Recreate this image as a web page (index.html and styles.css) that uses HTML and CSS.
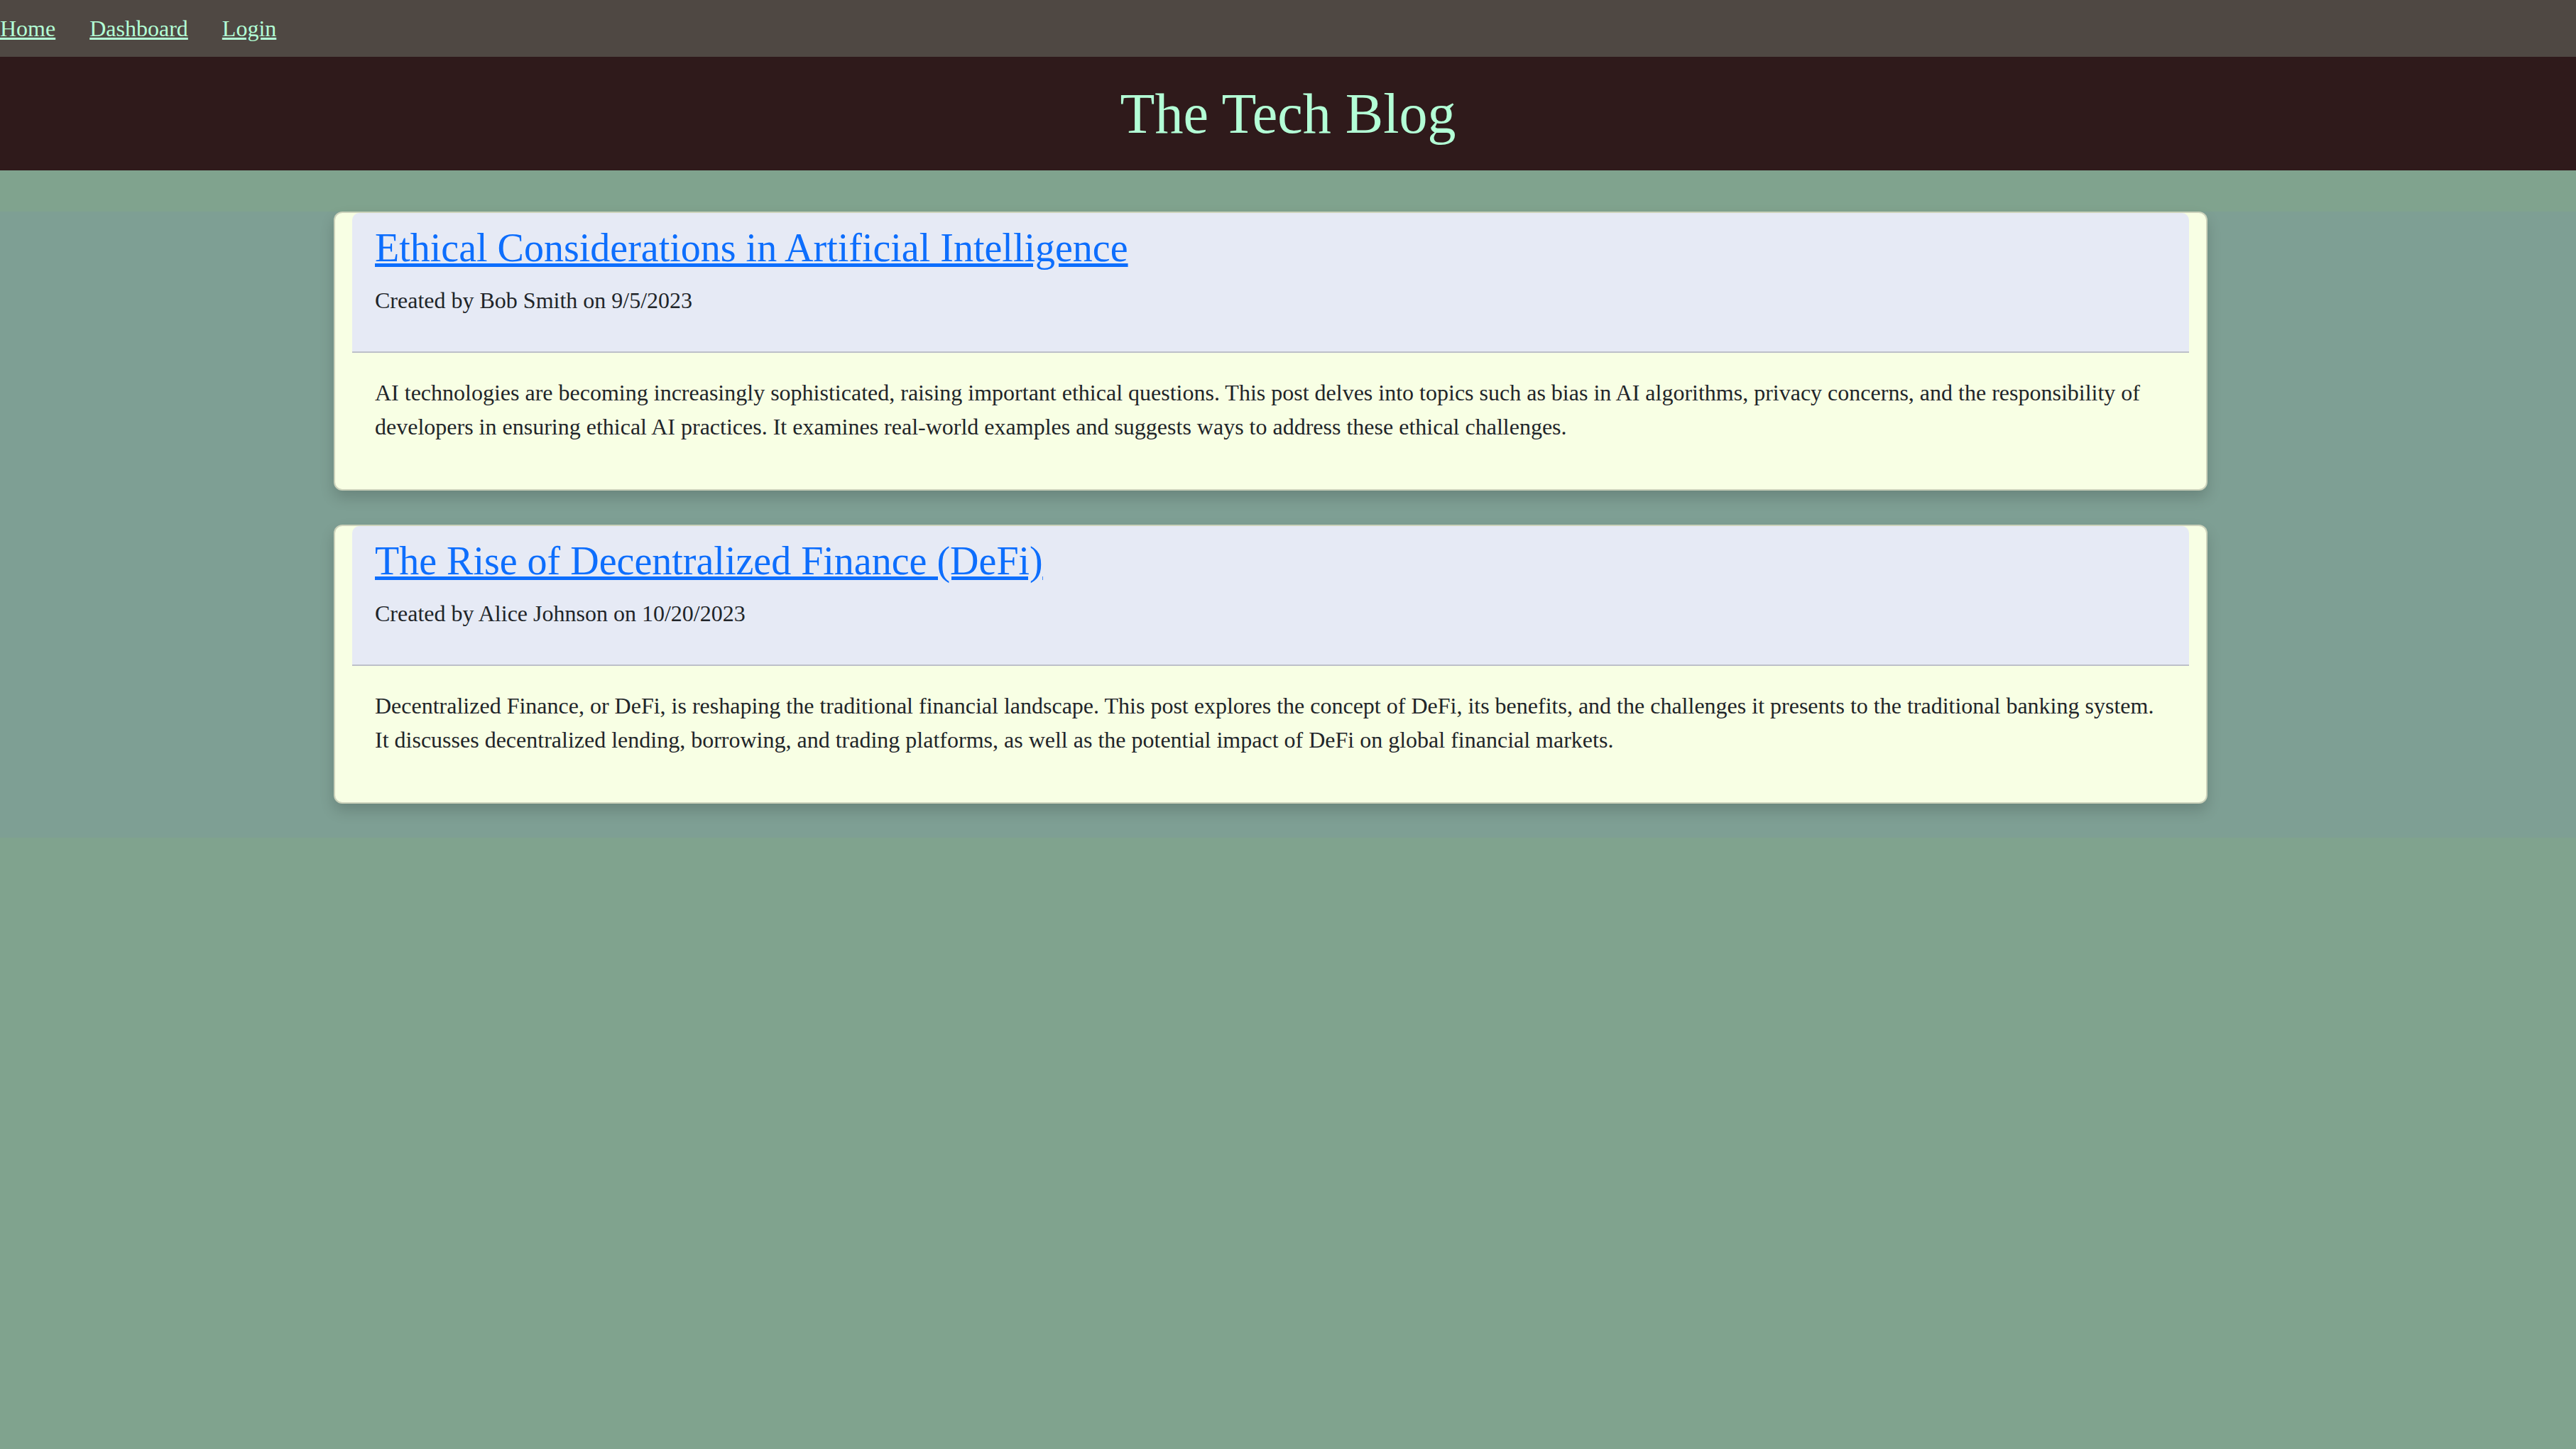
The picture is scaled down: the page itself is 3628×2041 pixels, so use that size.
FILE: index.html
```html
<!DOCTYPE html>
<html lang="en">
<head>
<meta charset="utf-8">
<title>The Tech Blog</title>
<link rel="stylesheet" href="styles.css">
</head>
<body>
<nav class="topnav">
  <a href="#" class="nav-link">Home</a>
  <a href="#" class="nav-link">Dashboard</a>
  <a href="#" class="nav-link">Login</a>
</nav>
<header class="site-header">
  <h1 class="site-title">The Tech Blog</h1>
</header>
<main class="posts">
  <div class="container">
    <article class="card">
      <div class="card-header">
        <h3 class="post-title"><a href="#">Ethical Considerations in Artificial Intelligence</a></h3>
        <p class="post-meta">Created by Bob Smith on 9/5/2023</p>
      </div>
      <div class="card-body">
        <p class="post-text">AI technologies are becoming increasingly sophisticated, raising important ethical questions. This post delves into topics such as bias in AI algorithms, privacy concerns, and the responsibility of developers in ensuring ethical AI practices. It examines real-world examples and suggests ways to address these ethical challenges.</p>
      </div>
    </article>
    <article class="card">
      <div class="card-header">
        <h3 class="post-title"><a href="#">The Rise of Decentralized Finance (DeFi)</a></h3>
        <p class="post-meta">Created by Alice Johnson on 10/20/2023</p>
      </div>
      <div class="card-body">
        <p class="post-text">Decentralized Finance, or DeFi, is reshaping the traditional financial landscape. This post explores the concept of DeFi, its benefits, and the challenges it presents to the traditional banking system. It discusses decentralized lending, borrowing, and trading platforms, as well as the potential impact of DeFi on global financial markets.</p>
      </div>
    </article>
  </div>
</main>
</body>
</html>
```
FILE: styles.css
```css
html, body {
  margin: 0;
  padding: 0;
}

body {
  min-height: 100vh;
  background: #80a38e;
  font-family: "Liberation Serif", "Times New Roman", serif;
  color: #212529;
}

.topnav {
  display: flex;
  align-items: center;
  gap: 48px;
  height: 80px;
  background: #4f4843;
}

.nav-link {
  font-size: 32px;
  color: #b3ffd6;
  text-decoration: underline;
}

.site-header {
  display: flex;
  align-items: center;
  justify-content: center;
  height: 160px;
  background: #2f1a1b;
}

.site-title {
  margin: 0;
  font-size: 80px;
  font-weight: 400;
  line-height: normal;
  color: #b3ffd6;
}

.posts {
  margin-top: 58px;
  background: #7e9f94;
}

.container {
  width: 2639px;
  margin-left: 470px;
  display: flow-root;
}

.card {
  box-sizing: border-box;
  background: #f8ffe4;
  border: 2px solid rgba(0, 0, 0, 0.175);
  border-radius: 12px;
  padding: 0 24px;
  margin-bottom: 48px;
  box-shadow: 0 10px 20px rgba(0, 0, 0, 0.16);
}

.card-header {
  background: #e6eaf5;
  padding: 16px 32px;
  border-bottom: 2px solid rgba(0, 0, 0, 0.175);
  border-radius: 10px 10px 0 0;
}

.post-title {
  margin: 0 0 16px;
  font-size: 56px;
  font-weight: 400;
  line-height: 1.2;
}

.post-title a {
  color: #0d6efd;
  text-decoration: underline;
}

.post-meta {
  margin: 0 0 32px;
  font-size: 32px;
  line-height: 1.5;
}

.card-body {
  padding: 32px;
}

.post-text {
  margin: 0 0 32px;
  font-size: 32px;
  line-height: 1.5;
}
```
